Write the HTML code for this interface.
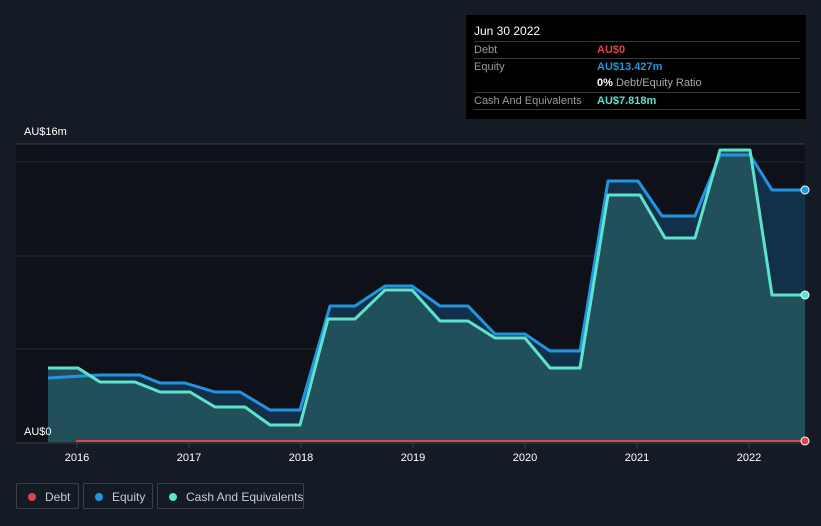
<!DOCTYPE html>
<html><head><meta charset="utf-8"><style>
html,body{margin:0;width:821px;height:526px;overflow:hidden}
body{background:#151b25;font-family:"Liberation Sans",sans-serif;position:relative}
.tt{position:absolute;left:466px;top:15px;width:340px;height:104px;background:#000;color:#fff;font-size:11px}
.tt .r{position:absolute;left:8px;right:6px;height:17px;border-top:1px solid #3a3a3a;line-height:17px}
.tt .l{color:#9a9a9a}
.tt .v{position:absolute;left:123px;top:0;font-weight:bold;white-space:nowrap}
.leg{position:absolute;top:483px;height:26px;border:1px solid #3a414c;border-radius:2px;color:#c8ccd2;font-size:12px;line-height:26px;box-sizing:border-box;white-space:nowrap}
.leg i{position:absolute;left:11px;top:9px;width:8px;height:8px;border-radius:50%}
.leg span{position:absolute;left:28px}
</style></head><body>
<svg width="821" height="526" style="position:absolute;left:0;top:0">
<rect x="16" y="144" width="789" height="298" fill="#0e1218"/>
<line x1="16" y1="144" x2="805" y2="144" stroke="#3a3f47"/>
<line x1="16" y1="162" x2="805" y2="162" stroke="#262b33"/>
<line x1="16" y1="256" x2="805" y2="256" stroke="#262b33"/>
<line x1="16" y1="349" x2="805" y2="349" stroke="#262b33"/>
<path d="M48,378 L100,375 L140,375 L160,383 L185,383 L215,392 L240,392 L270,410 L300,410 L330,306 L355,306 L385,286 L412,286 L440,306 L468,306 L495,334 L525,334 L550,351 L580,351 L608,181 L638,181 L662,216 L695,216 L720,155 L750,155 L772,190 L805,190 L805,442 L48,442Z" fill="#13304a"/>
<path d="M48,368 L78,368 L100,382 L135,382 L160,392 L190,392 L215,407 L245,407 L270,425 L300,425 L328,319 L355,319 L385,290 L412,290 L440,321 L468,321 L495,338 L525,338 L550,368 L580,368 L608,195 L640,195 L665,238 L695,238 L720,150 L750,150 L772,295 L805,295 L805,442 L48,442Z" fill="#24535c" opacity="0.9"/>
<path d="M48,378 L100,375 L140,375 L160,383 L185,383 L215,392 L240,392 L270,410 L300,410 L330,306 L355,306 L385,286 L412,286 L440,306 L468,306 L495,334 L525,334 L550,351 L580,351 L608,181 L638,181 L662,216 L695,216 L720,155 L750,155 L772,190 L805,190" fill="none" stroke="#2394df" stroke-width="3" stroke-linejoin="round"/>
<path d="M48,368 L78,368 L100,382 L135,382 L160,392 L190,392 L215,407 L245,407 L270,425 L300,425 L328,319 L355,319 L385,290 L412,290 L440,321 L468,321 L495,338 L525,338 L550,368 L580,368 L608,195 L640,195 L665,238 L695,238 L720,150 L750,150 L772,295 L805,295" fill="none" stroke="#5ee2cc" stroke-width="3" stroke-linejoin="round"/>
<line x1="16" y1="443" x2="805" y2="443" stroke="#3a3f47"/>
<line x1="76" y1="441" x2="805" y2="441" stroke="#e0434b" stroke-width="2"/>
<circle cx="805" cy="190" r="4" fill="#2394df" stroke="#fff" stroke-width="1"/>
<circle cx="805" cy="295" r="4" fill="#5ee2cc" stroke="#fff" stroke-width="1"/>
<circle cx="805" cy="441" r="4" fill="#e0434b" stroke="#fff" stroke-width="1"/>
<g stroke="#3a3f47"><line x1="77" y1="443" x2="77" y2="448"/><line x1="189" y1="443" x2="189" y2="448"/><line x1="301" y1="443" x2="301" y2="448"/><line x1="413" y1="443" x2="413" y2="448"/><line x1="525" y1="443" x2="525" y2="448"/><line x1="637" y1="443" x2="637" y2="448"/><line x1="749" y1="443" x2="749" y2="448"/></g>
<g fill="#fff" font-size="11" text-anchor="middle" font-family="Liberation Sans,sans-serif"><text x="77" y="461">2016</text><text x="189" y="461">2017</text><text x="301" y="461">2018</text><text x="413" y="461">2019</text><text x="525" y="461">2020</text><text x="637" y="461">2021</text><text x="749" y="461">2022</text>
<text x="24" y="135" text-anchor="start">AU$16m</text><text x="24" y="435" text-anchor="start">AU$0</text></g>
</svg>
<div class="tt">
<div style="position:absolute;left:8px;top:9px;font-size:12px">Jun 30 2022</div>
<div class="r" style="top:26px"><span class="l">Debt</span><span class="v" style="color:#e0434b">AU$0</span></div>
<div class="r" style="top:43px"><span class="l">Equity</span><span class="v" style="color:#2394df">AU$13.427m</span></div>
<div class="r" style="top:60px;border-top:none"><span class="v" style="color:#fff">0% <span style="color:#aaa;font-weight:normal">Debt/Equity Ratio</span></span></div>
<div class="r" style="top:77px"><span class="l">Cash And Equivalents</span><span class="v" style="color:#5ee2cc">AU$7.818m</span></div>
<div class="r" style="top:94px;height:0"></div>
</div>
<div class="leg" style="left:16px;width:63px"><i style="background:#e0434b"></i><span>Debt</span></div>
<div class="leg" style="left:83px;width:70px"><i style="background:#2394df"></i><span>Equity</span></div>
<div class="leg" style="left:157px;width:147px"><i style="background:#5ee2cc"></i><span>Cash And Equivalents</span></div>
</body></html>
